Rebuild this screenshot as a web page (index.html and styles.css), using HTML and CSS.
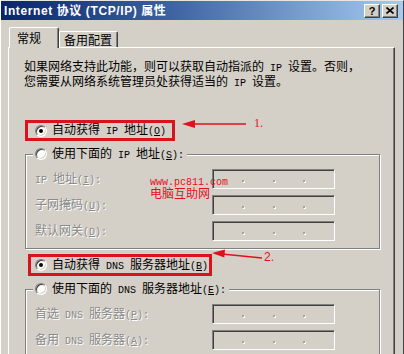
FILE: index.html
```html
<!DOCTYPE html>
<html>
<head>
<meta charset="utf-8">
<link rel="stylesheet" href="styles.css">
</head>
<body>
<div class="win">
  <div class="title">
    <span class="title-text">Internet 协议 (TCP/IP) 属性</span>
    <div class="tbtns">
      <span class="tbtn help">?</span>
      <span class="tbtn close"><svg width="8" height="7" viewBox="0 0 8 7"><path d="M0.5 0.5 L7.5 6.5 M7.5 0.5 L0.5 6.5" stroke="#000" stroke-width="1.6" fill="none"/></svg></span>
    </div>
  </div>
  <div class="body">
    <div class="tabs">
      <div class="tab active">常规</div>
      <div class="tab">备用配置</div>
    </div>
    <div class="panel">
      <p class="intro">如果网络支持此功能，则可以获取自动指派的<span class="en"> IP </span>设置。否则，<br>您需要从网络系统管理员处获得适当的<span class="en"> IP </span>设置。</p>

      <div class="hl hl-ip"><span class="radio checked"></span><span>自动获得<span class="en"> IP </span>地址<span class="en">(<u>O</u>)</span></span></div>

      <div class="group g-ip">
        <div class="legend"><span class="radio"></span><span>使用下面的<span class="en"> IP </span>地址<span class="en">(<u>S</u>):</span></span></div>
        <div class="row first"><span class="lbl"><span class="en">IP </span>地址<span class="en">(<u>I</u>):</span></span><div class="ipbox"><i></i><b></b><i></i><b></b><i></i><b></b><i></i></div></div>
        <div class="row"><span class="lbl">子网掩码<span class="en">(<u>U</u>):</span></span><div class="ipbox"><i></i><b></b><i></i><b></b><i></i><b></b><i></i></div></div>
        <div class="row"><span class="lbl">默认网关<span class="en">(<u>D</u>):</span></span><div class="ipbox"><i></i><b></b><i></i><b></b><i></i><b></b><i></i></div></div>
      </div>

      <div class="hl hl-dns"><span class="radio checked"></span><span>自动获得<span class="en"> DNS </span>服务器地址<span class="en">(<u>B</u>)</span></span></div>

      <div class="group g-dns">
        <div class="legend"><span class="radio"></span><span>使用下面的<span class="en"> DNS </span>服务器地址<span class="en">(<u>E</u>):</span></span></div>
        <div class="row first"><span class="lbl">首选<span class="en"> DNS </span>服务器<span class="en">(<u>P</u>):</span></span><div class="ipbox"><i></i><b></b><i></i><b></b><i></i><b></b><i></i></div></div>
        <div class="row"><span class="lbl">备用<span class="en"> DNS </span>服务器<span class="en">(<u>A</u>):</span></span><div class="ipbox"><i></i><b></b><i></i><b></b><i></i><b></b><i></i></div></div>
      </div>
    </div>
  </div>
</div>

<svg class="arrows" width="404" height="354" viewBox="0 0 404 354">
  <line x1="193" y1="124" x2="246" y2="124" stroke="#e0101c" stroke-width="1.3"/>
  <polygon points="182,124 195,120 195,128" fill="#e0101c"/>
  <line x1="222" y1="254" x2="262" y2="258" stroke="#e0101c" stroke-width="1.3"/>
  <polygon points="212,253 225,249.5 224.3,257.5" fill="#e0101c"/>
</svg>
<span class="note n1">1.</span>
<span class="note n2">2.</span>
<div class="mark"><div class="mark-url">www.pc811.com</div><div class="mark-cn">电脑互助网</div></div>
</body>
</html>
```

FILE: styles.css
```css
* { box-sizing: border-box; }
html, body { margin: 0; padding: 0; }
body {
  position: relative;
  width: 404px;
  height: 354px;
  overflow: hidden;
  background: #d4d0c8;
  font-family: "Noto Sans CJK SC", "Noto Sans", sans-serif;
  font-size: 12px;
  color: #000;
}
.en { font-family: "Liberation Mono", "DejaVu Sans Mono", monospace; font-size: 10px; }
u { text-decoration: underline; text-underline-offset: 1px; }

.win {
  width: 404px;
  height: 354px;
  background: #d4d0c8;
  border-top: 1px solid #e8e6e2;
  border-left: 1px solid #fff;
  border-right: 1px solid #404040;
  display: flex;
  flex-direction: column;
}

.title {
  height: 19px;
  flex: none;
  display: flex;
  align-items: center;
  justify-content: space-between;
  padding: 0 5px 0 3px;
  background: linear-gradient(90deg, #0a246a 0%, #3a5f9e 40%, #a6caf0 100%);
}
.title-text {
  color: #fff;
  font-family: "Liberation Sans", "Noto Sans CJK SC", sans-serif;
  font-weight: bold;
  font-size: 12px;
  line-height: 14px;
  letter-spacing: 0.6px;
}
.tbtns { display: flex; gap: 2px; }
.tbtn {
  width: 16px;
  height: 14px;
  display: flex;
  align-items: center;
  justify-content: center;
  background: #d4d0c8;
  border-top: 1px solid #fff;
  border-left: 1px solid #fff;
  border-right: 1px solid #404040;
  border-bottom: 1px solid #404040;
  box-shadow: inset -1px -1px #808080;
  font-family: "Liberation Sans", sans-serif;
  font-weight: bold;
  font-size: 11px;
  line-height: 12px;
}

.body {
  flex: 1;
  display: flex;
  flex-direction: column;
  padding: 7px 0 0 7px;
}
.tabs {
  height: 20px;
  display: flex;
  align-items: flex-end;
  padding-left: 1px;
}
.tab {
  border-top: 1px solid #fff;
  border-left: 1px solid #fff;
  border-right: 1px solid #404040;
  box-shadow: inset -1px 0 #808080;
  border-radius: 2px 2px 0 0;
  background: #d4d0c8;
  line-height: 14px;
}
.tab.active {
  width: 50px;
  height: 21px;
  margin-bottom: -1px;
  padding: 3px 0 0 7px;
  position: relative;
  z-index: 1;
}
.tab:not(.active) {
  width: 59px;
  height: 16px;
  padding: 1px 0 0 4px;
}

.panel {
  width: 387px;
  flex: 1;
  border-top: 1px solid #fff;
  border-left: 1px solid #fff;
  border-right: 1px solid #404040;
  box-shadow: inset -1px 0 #808080;
  padding-top: 12px;
}
.intro {
  margin: 0;
  padding-left: 15px;
  line-height: 12px;
  white-space: nowrap;
}

.hl {
  display: flex;
  align-items: center;
  gap: 5px;
  border: 3px solid #d9121c;
  line-height: 14px;
}
.hl-ip { margin: 30px 0 0 16px; width: 150px; height: 21px; padding-left: 7px; }
.hl-dns { margin: 5px 0 0 19px; width: 184px; height: 22px; padding-left: 4px; }

.radio {
  flex: none;
  position: relative;
  width: 12px;
  height: 12px;
  border-radius: 50%;
  background: #fff;
  border: 1px solid;
  border-color: #808080 #fff #fff #808080;
  box-shadow: inset 1px 1px #404040, inset -1px -1px #d4d0c8;
}
.radio.checked::after {
  content: "";
  position: absolute;
  left: 3px;
  top: 3px;
  width: 4px;
  height: 4px;
  border-radius: 50%;
  background: #000;
}

.group {
  width: 355px;
  margin: 13px 0 0 16px;
  border: 1px solid #808080;
  box-shadow: 1px 1px 0 #fff, inset 1px 1px 0 #fff;
  padding: 0 0 7px 9px;
}
.g-dns { padding-bottom: 8px; }
.legend {
  display: flex;
  align-items: center;
  gap: 5px;
  width: fit-content;
  height: 14px;
  line-height: 14px;
  margin: -8px 0 0 -2px;
  padding: 0 3px 0 2px;
  background: #d4d0c8;
}
.row {
  display: flex;
  align-items: center;
  height: 20px;
  margin-top: 6px;
}
.row.first { margin-top: 8px; }
.lbl {
  width: 177px;
  color: #8a8a8a;
  text-shadow: 1px 1px 0 #fff;
  line-height: 14px;
}
.ipbox {
  width: 123px;
  height: 20px;
  display: flex;
  align-items: center;
  border-top: 1px solid #808080;
  border-left: 1px solid #808080;
  border-right: 1px solid #fff;
  border-bottom: 1px solid #fff;
  box-shadow: inset 1px 1px #404040, inset -1px -1px #d4d0c8;
  padding: 0 2px;
}
.ipbox i { flex: 1; }
.ipbox b {
  width: 2px;
  height: 2px;
  margin: 4px 2px 0;
  background: #a8a49c;
  box-shadow: 1px 1px 0 #fff;
}

.arrows { position: absolute; left: 0; top: 0; pointer-events: none; }
.note {
  position: absolute;
  color: #e0101c;
  font-family: "Liberation Serif", serif;
  font-size: 12px;
  line-height: 12px;
}
.n1 { left: 254px; top: 117px; }
.n2 { left: 264px; top: 251px; font-family: "Liberation Sans", sans-serif; font-size: 12px; }
.mark {
  position: absolute;
  left: 150px;
  top: 178px;
  color: #e0101c;
}
.mark-url { font-family: "Liberation Mono", monospace; font-size: 10px; line-height: 9px; }
.mark-cn { font-size: 12px; line-height: 12px; margin-top: 0; }
```
